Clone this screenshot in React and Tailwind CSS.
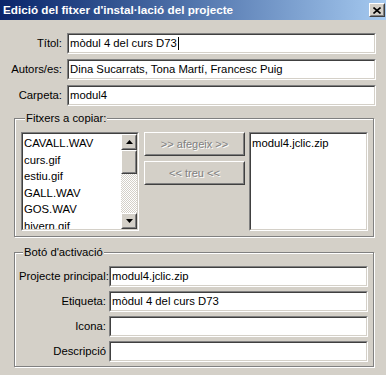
import React from 'react';

const font = { fontFamily: '"Liberation Sans", Arial, sans-serif' };

// sunken (text field / list) border
const Sunken = ({ className = '', children }) => (
  <div className={`border border-t-[#808080] border-l-[#808080] border-b-white border-r-white ${className}`}>
    <div className="h-full w-full border border-t-[#404040] border-l-[#404040] border-b-[#d4d0c8] border-r-[#d4d0c8] bg-white overflow-hidden">
      {children}
    </div>
  </div>
);

// raised (button) border
const Raised = ({ className = '', children }) => (
  <div className={`border border-t-white border-l-white border-b-[#404040] border-r-[#404040] bg-[#d4d0c8] ${className}`}>
    <div className="h-full w-full border border-t-[#d4d0c8] border-l-[#d4d0c8] border-b-[#808080] border-r-[#808080] flex items-center justify-center">
      {children}
    </div>
  </div>
);

const Field = ({ value, caret }) => (
  <Sunken className="h-[21px]">
    <div className="h-full flex items-center pl-[1px] text-[11.3px] text-black leading-none whitespace-nowrap">
      <span>{value}</span>
      {caret && <span className="inline-block w-px h-[13px] bg-black ml-[1px]"></span>}
    </div>
  </Sunken>
);

const Group = ({ title, className = '', children }) => (
  <fieldset className={`border border-[#808080] shadow-[1px_1px_0_#fff,inset_1px_1px_0_#fff] ${className}`}>
    <legend className="ml-[4px] px-[1px] text-[11.3px] leading-[13px] text-black bg-[#d4d0c8]">{title}</legend>
    {children}
  </fieldset>
);

const Arrow = ({ up }) => (
  <svg width="7" height="4" viewBox="0 0 7 4">
    {up ? <polygon points="3.5,0 7,4 0,4" fill="#000" /> : <polygon points="0,0 7,0 3.5,4" fill="#000" />}
  </svg>
);

const files = ['CAVALL.WAV', 'curs.gif', 'estiu.gif', 'GALL.WAV', 'GOS.WAV', 'hivern.gif'];

export default function App() {
  return (
    <div className="w-[386px] h-[375px] bg-[#d4d0c8] overflow-hidden flex flex-col" style={font}>
      {/* title bar */}
      <div className="h-[20px] flex items-center justify-between pl-[3px] pr-[1px] bg-gradient-to-r from-[#0a246a] to-[#a6caf0]">
        <span className="text-white font-bold text-[11.7px] leading-none whitespace-nowrap">
          Edició del fitxer d'instal·lació del projecte
        </span>
        <Raised className="w-[16px] h-[14px]">
          <svg width="8" height="7" viewBox="0 0 8 7">
            <path d="M0.5 0.5 L7.5 6.5 M7.5 0.5 L0.5 6.5" stroke="#000" strokeWidth="1.6" />
          </svg>
        </Raised>
      </div>

      {/* top fields */}
      <div className="mt-[13px] pr-[10px] grid grid-cols-[62px_1fr] gap-x-[5px] gap-y-[5px] items-center text-[11.3px] text-black">
        <span className="text-right">Títol:</span>
        <Field value="mòdul 4 del curs D73" caret />
        <span className="text-right">Autors/es:</span>
        <Field value="Dina Sucarrats, Tona Martí, Francesc Puig" />
        <span className="text-right">Carpeta:</span>
        <Field value="modul4" />
      </div>

      {/* files group */}
      <Group title="Fitxers a copiar:" className="ml-[14px] w-[360px] mt-[6px] pl-[6px] pb-[5px]">
        <div className="flex mt-[7px]">
          <Sunken className="w-[118px] h-[99px]">
            <div className="flex h-full">
              <div className="flex-1 text-[11.3px] leading-[16.6px] text-black pl-[1px] pt-[1px] overflow-hidden">
                {files.map((f) => (
                  <div key={f} className="whitespace-nowrap">{f}</div>
                ))}
              </div>
              <div className="w-[16px] flex flex-col">
                <Raised className="h-[16px]"><Arrow up /></Raised>
                <Raised className="h-[24px]" />
                <div className="flex-1 bg-[repeating-conic-gradient(#d4d0c8_0_25%,#fff_0_50%)] bg-[length:2px_2px]"></div>
                <Raised className="h-[16px]"><Arrow /></Raised>
              </div>
            </div>
          </Sunken>
          <div className="ml-[5px] w-[101px] flex flex-col gap-[5px]">
            <Raised className="h-[24px]">
              <span className="text-[11px] text-[#808080] [text-shadow:1px_1px_0_#fff]">&gt;&gt; afegeix &gt;&gt;</span>
            </Raised>
            <Raised className="h-[24px]">
              <span className="text-[11px] text-[#808080] [text-shadow:1px_1px_0_#fff]">&lt;&lt; treu &lt;&lt;</span>
            </Raised>
          </div>
          <Sunken className="ml-[4px] w-[119px] h-[99px]">
            <div className="text-[11.3px] leading-[16.6px] text-black pl-[1px] pt-[1px]">modul4.jclic.zip</div>
          </Sunken>
        </div>
      </Group>

      {/* activation group */}
      <Group title="Botó d'activació" className="ml-[14px] w-[360px] mt-[9px] pl-[4px] pr-[5px] pb-[4px]">
        <div className="mt-[7px] grid grid-cols-[87px_1fr] gap-x-[3px] gap-y-[4px] items-center text-[11.3px] text-black">
          <span className="text-right whitespace-nowrap">Projecte principal:</span>
          <Field value="modul4.jclic.zip" />
          <span className="text-right">Etiqueta:</span>
          <Field value="mòdul 4 del curs D73" />
          <span className="text-right">Icona:</span>
          <Field value="" />
          <span className="text-right">Descripció</span>
          <Field value="" />
        </div>
      </Group>
    </div>
  );
}
